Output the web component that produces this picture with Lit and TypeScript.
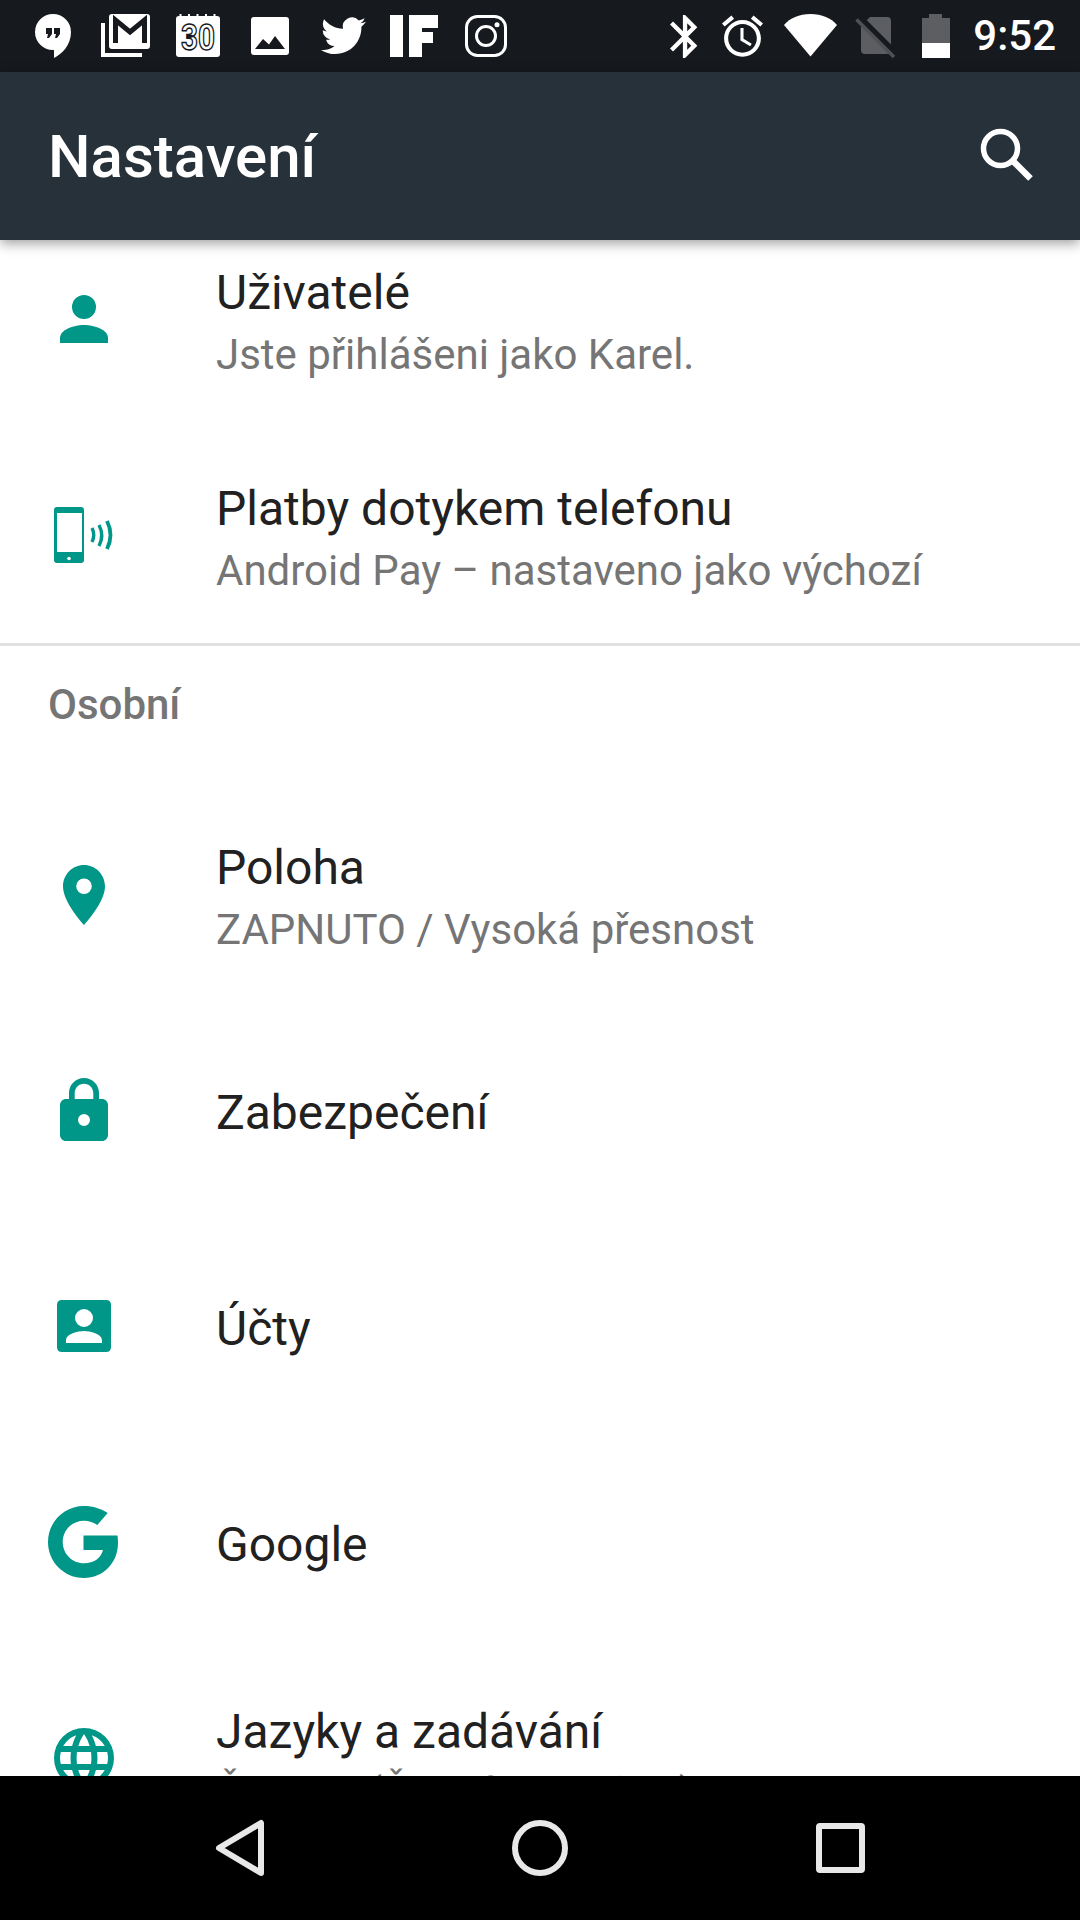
import { LitElement, html, css, svg } from "lit";
import { customElement } from "lit/decorators.js";

const icons: Record<string, unknown> = {
  person: svg`<svg class="ic" viewBox="0 0 72 72"><circle cx="36" cy="24" r="12"/><path d="M12 60v-5c0-8 13-13 24-13s24 5 24 13v5z"/></svg>`,
  pay: svg`<svg class="ic" viewBox="0 0 72 72"><path fill-rule="evenodd" d="M9 8h24q3 0 3 3v50q0 3-3 3H9q-3 0-3-3V11q0-3 3-3zm0 6v39h25V14z"/><circle cx="21" cy="59.500" r="1.800" fill="#fff"/><path fill="none" stroke="#009688" stroke-width="3.400" d="M44 29q3.500 7 0 14M51 26q5.500 10.500 0 21"/><path fill="none" stroke="#009688" stroke-width="3.800" d="M59 22q7 14 0 28"/></svg>`,
  pin: svg`<svg class="ic" viewBox="0 0 72 72"><path fill-rule="evenodd" d="M36 7C24.400 7 15 16.500 15 28.500 15 44.500 36 67 36 67s21-22.500 21-38.500C57 16.500 47.600 7 36 7zm0 29a7.800 7.800 0 1 1 0-15.600 7.800 7.800 0 0 1 0 15.600z"/></svg>`,
  lock: svg`<svg class="ic" viewBox="0 0 72 72"><path transform="translate(0 1)" fill-rule="evenodd" d="M54 24h-3v-6c0-8.280-6.720-15-15-15s-15 6.720-15 15v6h-3c-3.300 0-6 2.700-6 6v30c0 3.300 2.700 6 6 6h36c3.300 0 6-2.700 6-6V30c0-3.300-2.700-6-6-6zM36 51a6 6 0 1 1 0-12 6 6 0 0 1 0 12zm9.300-27H26.700v-6c0-5.130 4.170-9.300 9.300-9.300s9.300 4.170 9.300 9.300z"/></svg>`,
  account: svg`<svg class="ic" viewBox="0 0 72 72"><path fill-rule="evenodd" d="M14 10h44q5 0 5 5v42q0 5-5 5H14q-5 0-5-5V15q0-5 5-5zm22 9a9 9 0 1 0 0 18 9 9 0 0 0 0-18zM18 53h36v-3c0-6-12-9-18-9s-18 3-18 9z"/></svg>`,
  google: svg`<svg class="ic" viewBox="0 0 72 72"><path d="M35.500 29.500V44H55c-2 8-9 13.300-19 13.300-11.800 0-21.300-9.500-21.300-21.300S24.200 14.700 36 14.700c5 0 9.600 1.600 13.300 4.300L59.700 7C53.300 2.700 45 0 36 0 16.100 0 0 16.100 0 36s16.100 36 36 36c19 0 34-15 34-35 0-2.500-.2-5-.5-7.500z"/></svg>`,
  globe: svg`<svg class="ic" viewBox="0 0 72 72"><path fill-rule="evenodd" d="M36 6a30 30 0 1 0 0 60 30 30 0 0 0 0-60zm20.800 18h-8.900a47 47 0 0 0-4.100-10.700A24 24 0 0 1 56.800 24zM36 12.100A42 42 0 0 1 41.700 24H30.300A42 42 0 0 1 36 12.100zM12.800 42a24.500 24.500 0 0 1 0-12h10.100a50 50 0 0 0 0 12zm2.400 6h8.900a47 47 0 0 0 4.100 10.700A24 24 0 0 1 15.200 48zm8.900-24h-8.900a24 24 0 0 1 13-10.700A47 47 0 0 0 24.100 24zM36 59.900A42 42 0 0 1 30.300 48h11.400A42 42 0 0 1 36 59.900zM43 42H29a44 44 0 0 1 0-12h14a44 44 0 0 1 0 12zm.8 16.700A47 47 0 0 0 47.900 48h8.900a24 24 0 0 1-13 10.700zM49.100 42a50 50 0 0 0 0-12h10.100a24.500 24.500 0 0 1 0 12z"/></svg>`,
};

const DARK = "#16191e";

const leftIcons = [
  svg`<svg class="slot" viewBox="0 0 72 48"><path fill-rule="evenodd" d="M35 2a18 18 0 0 0 0 36h1v8c8-4 17-13 17-26A18 18 0 0 0 35 2zM28 16h6v6l-3 4h-2l1-4h-2zm8 0h6v6l-3 4h-2l1-4h-2z"/></svg>`,
  svg`<svg class="slot" viewBox="0 0 72 48"><path d="M11 11h4v30h37v4H11z"/><rect x="19" y="2" width="41" height="35" rx="3"/><path d="M25.500 31V8L40 20 54.500 8v23" fill="none" stroke="${DARK}" stroke-width="5"/></svg>`,
  svg`<svg class="slot" viewBox="0 0 72 48"><path d="M17.500 2h2v3h-2zm8.500 0h2v3h-2zm8.500 0h2v3h-2zm8.500 0h2v3h-2zm8.500 0h2v3h-2z"/><rect x="14" y="4" width="44" height="41" rx="3"/><text class="cal" x="36" y="38" text-anchor="middle" textLength="34" lengthAdjust="spacingAndGlyphs">30</text></svg>`,
  svg`<svg class="slot" viewBox="0 0 72 48"><path fill-rule="evenodd" d="M20 5h32q3 0 3 3v32q0 3-3 3H20q-3 0-3-3V8q0-3 3-3zm1 32h30L41 24l-6 8.500-6-5.500z"/></svg>`,
  svg`<svg class="slot" viewBox="0 0 72 48"><path transform="translate(15 1.250) scale(1.875)" d="M23.953 4.570a10 10 0 01-2.825.775 4.958 4.958 0 002.163-2.723c-.951.555-2.005.959-3.127 1.184a4.920 4.920 0 00-8.384 4.482C7.690 8.095 4.067 6.130 1.640 3.162a4.822 4.822 0 00-.666 2.475c0 1.710.870 3.213 2.188 4.096a4.904 4.904 0 01-2.228-.616v.060a4.923 4.923 0 003.946 4.827 4.996 4.996 0 01-2.212.085 4.936 4.936 0 004.604 3.417 9.867 9.867 0 01-6.102 2.105c-.390 0-.779-.023-1.170-.067a13.995 13.995 0 007.557 2.209c9.053 0 13.998-7.496 13.998-13.985 0-.210 0-.420-.015-.630A9.935 9.935 0 0024 4.590z"/></svg>`,
  svg`<svg class="slot" viewBox="0 0 72 48"><path d="M12 3h13v42H12zM31 3h29v13H44v4h11v11H44v14H31z"/></svg>`,
  svg`<svg class="slot" viewBox="0 0 72 48"><rect x="16.500" y="4.500" width="39" height="39" rx="11" fill="none" stroke="#fff" stroke-width="3"/><circle cx="36" cy="24" r="9.500" fill="none" stroke="#fff" stroke-width="3"/><circle cx="47" cy="12.700" r="2.500"/></svg>`,
];

const rightIcons = [
  svg`<svg class="r60" viewBox="0 0 60 48"><path transform="translate(6.250 -1.300) scale(2.150)" d="M17.710 7.710L12 2h-1v7.590L6.410 5 5 6.410 10.590 12 5 17.590 6.410 19 11 14.410V22h1l5.710-5.710-4.300-4.290 4.300-4.290zM13 5.830l1.880 1.880L13 9.590V5.830zm1.880 10.460L13 18.170v-3.760l1.880 1.880z"/></svg>`,
  svg`<svg class="r64" viewBox="0 0 64 48"><path transform="translate(4.900 -.3) scale(2.050)" d="M22 5.720l-4.600-3.860-1.290 1.530 4.600 3.860L22 5.720zM7.880 3.390L6.600 1.860 2 5.710l1.290 1.530 4.590-3.850zM12.500 8H11v6l4.750 2.850.75-1.230-4-2.370V8zM12 4c-4.970 0-9 4.030-9 9s4.030 9 9 9 9-4.030 9-9-4.030-9-9-9zm0 16c-3.870 0-7-3.130-7-7s3.130-7 7-7 7 3.130 7 7-3.130 7-7 7z"/></svg>`,
  svg`<svg class="r67" viewBox="0 0 67 48"><path d="M33.500 2C22 2 13 6 7 13l26.500 31.500L60 13C54 6 45 2 33.500 2z"/></svg>`,
  svg`<svg class="r63" viewBox="0 0 63 48"><path fill="#5c5e61" d="M26 5h17q4 0 4 4v29q0 4-4 4H21q-4 0-4-4V14z"/><path d="M14 5l36 36" stroke="${DARK}" stroke-width="8"/><path d="M12.500 7.500L50 45" stroke="#4e5054" stroke-width="3.500"/></svg>`,
  svg`<svg class="r58" viewBox="0 0 58 48"><path fill="#5c5e61" d="M22 2h13v4h8v25H15V6h7z"/><path d="M15 31h28v15H15z"/></svg>`,
];

@customElement("app-root")
export class AppRoot extends LitElement {
  static styles = css`
    :host { display: block; width: 1080px; height: 1920px; font-family: Roboto, "Noto Sans", sans-serif; background: #fff; }
    .page { display: flex; flex-direction: column; height: 1920px; overflow: hidden; }
    .status { height: 72px; flex: none; background: #16191e; display: flex; align-items: center; justify-content: space-between; padding: 0 24px 0 18px; color: #fff; }
    .group { display: flex; align-items: center; }
    .status svg { display: block; height: 48px; fill: #fff; }
    .slot { width: 72px; }
    .r60 { width: 60px; }
    .r64 { width: 64px; }
    .r67 { width: 67px; }
    .r63 { width: 63px; }
    .r58 { width: 58px; }
    .cal { font-family: Roboto, sans-serif; font-size: 36px; font-weight: 700; fill: #fff; stroke: #16191e; stroke-width: 1.5px; }
    .time { font-size: 42px; font-weight: 500; margin-left: 8px; line-height: 48px; }
    .bar { height: 168px; flex: none; background: #263139; display: flex; align-items: center; justify-content: space-between; padding: 0 40px 0 48px; box-shadow: 0 3px 12px rgba(0,0,0,.4); position: relative; z-index: 1; color: #fff; }
    .bar h1 { margin: 0; font-size: 60px; font-weight: 500; }
    .bar svg { width: 60px; height: 60px; display: block; }
    .list { flex: 1; min-height: 0; overflow: hidden; }
    .scroll { margin-top: -29px; }
    .row { height: 216px; display: flex; align-items: center; }
    .iconbox { width: 216px; flex: none; display: flex; justify-content: center; padding-right: 48px; box-sizing: border-box; }
    .ic { width: 72px; height: 72px; fill: #009688; display: block; }
    .text { display: flex; flex-direction: column; padding-top: 6px; }
    .text.two { padding-top: 8px; }
    .title { font-size: 48px; line-height: 64px; color: #212121; }
    .sub { font-size: 42px; line-height: 60px; color: #757575; }
    .rule { height: 3px; background: #e0e0e0; }
    .head { height: 140px; box-sizing: border-box; padding: 37px 0 0 48px; font-size: 42px; line-height: 44px; font-weight: 500; color: #757575; }
    .nav { height: 144px; flex: none; background: #000; display: flex; align-items: flex-start; justify-content: center; }
    .nav svg { width: 720px; height: 144px; display: block; fill: none; stroke: #e8e8e8; stroke-width: 6; stroke-linejoin: round; }
  `;

  private row(icon: string, title: string, sub?: string) {
    return html`<div class="row">
      <div class="iconbox">${icons[icon]}</div>
      <div class="text ${sub ? "two" : ""}"><div class="title">${title}</div>${sub ? html`<div class="sub">${sub}</div>` : ""}</div>
    </div>`;
  }

  render() {
    return html`<div class="page">
      <div class="status">
        <div class="group">${leftIcons}</div>
        <div class="group">${rightIcons}<span class="time">9:52</span></div>
      </div>
      <div class="bar"><h1>Nastavení</h1><svg viewBox="0 0 60 60"><circle cx="20.500" cy="22.500" r="17" fill="none" stroke="#fff" stroke-width="5.500"/><path d="M33 35l17.500 17.500" stroke="#fff" stroke-width="6.500"/></svg></div>
      <div class="list"><div class="scroll">
        ${this.row("person", "Uživatelé", "Jste přihlášeni jako Karel.")}
        ${this.row("pay", "Platby dotykem telefonu", "Android Pay – nastaveno jako výchozí")}
        <div class="rule"></div>
        <div class="head">Osobní</div>
        ${this.row("pin", "Poloha", "ZAPNUTO / Vysoká přesnost")}
        ${this.row("lock", "Zabezpečení")}
        ${this.row("account", "Účty")}
        ${this.row("google", "Google")}
        ${this.row("globe", "Jazyky a zadávání", "Čeština (Česká republika)")}
      </div></div>
      <div class="nav">
        <svg viewBox="0 0 720 144">
          <path d="M81 47v50L39 72z"/>
          <circle cx="360" cy="72" r="25"/>
          <rect x="639" y="50" width="43" height="44" rx="1"/>
        </svg>
      </div>
    </div>`;
  }
}
